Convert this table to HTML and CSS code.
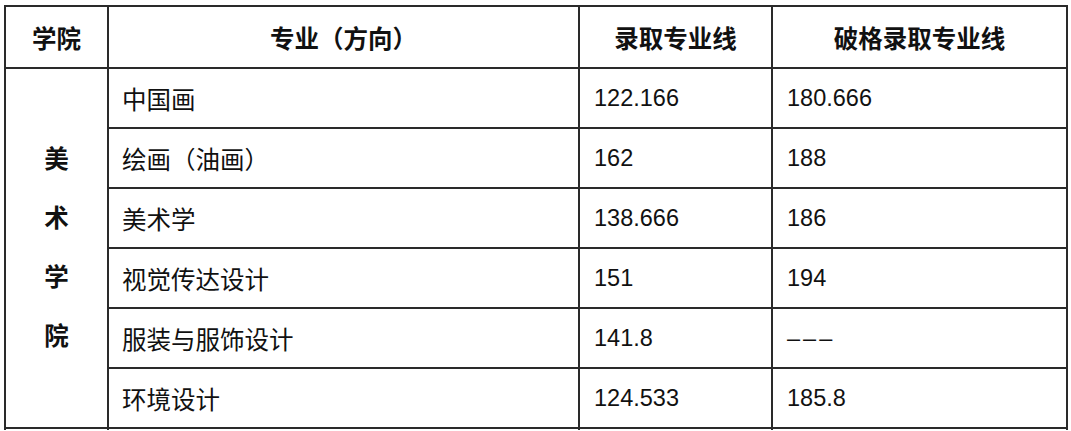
FILE: index.html
```html
<!DOCTYPE html>
<html lang="zh-CN">
<head>
<meta charset="utf-8">
<title>录取专业线</title>
<link rel="stylesheet" href="styles.css">
</head>
<body>
<table class="score-table">
  <colgroup>
    <col class="c-school">
    <col class="c-major">
    <col class="c-line">
    <col class="c-break">
  </colgroup>
  <thead>
    <tr class="head-row">
      <th>学院</th>
      <th>专业（方向）</th>
      <th>录取专业线</th>
      <th>破格录取专业线</th>
    </tr>
  </thead>
  <tbody>
    <tr class="row">
      <td class="school" rowspan="6">美<br>术<br>学<br>院</td>
      <td>中国画</td>
      <td class="num">122.166</td>
      <td class="num">180.666</td>
    </tr>
    <tr class="row">
      <td>绘画（油画）</td>
      <td class="num">162</td>
      <td class="num">188</td>
    </tr>
    <tr class="row">
      <td>美术学</td>
      <td class="num">138.666</td>
      <td class="num">186</td>
    </tr>
    <tr class="row">
      <td>视觉传达设计</td>
      <td class="num">151</td>
      <td class="num">194</td>
    </tr>
    <tr class="row">
      <td>服装与服饰设计</td>
      <td class="num">141.8</td>
      <td class="num"><span class="dash">–––</span></td>
    </tr>
    <tr class="row">
      <td>环境设计</td>
      <td class="num">124.533</td>
      <td class="num">185.8</td>
    </tr>
    <tr class="row-cut">
      <td></td>
      <td></td>
      <td></td>
      <td></td>
    </tr>
  </tbody>
</table>
</body>
</html>
```

FILE: styles.css
```css
html, body {
  margin: 0;
  padding: 0;
  background: #fff;
}

body {
  font-family: "Liberation Sans", "Noto Sans CJK SC", sans-serif;
  color: #111;
}

.score-table {
  border-collapse: collapse;
  table-layout: fixed;
  width: 1062px;
  margin: 5px 0 0 4px;
}

.c-school { width: 103px; }
.c-major { width: 471px; }
.c-line { width: 193px; }
.c-break { width: 295px; }

.score-table th,
.score-table td {
  border: 2px solid #2a2a2a;
  font-size: 24.5px;
  padding: 0 0 0 13px;
  vertical-align: middle;
  text-align: left;
  white-space: nowrap;
}

.score-table td.num {
  font-size: 23.5px;
  padding-left: 14px;
}

.dash {
  letter-spacing: 3px;
}

.score-table th {
  height: 60px;
  font-weight: bold;
  text-align: center;
  padding: 0;
}

.row td {
  height: 58px;
}

.score-table td.school {
  text-align: center;
  padding: 0;
  font-weight: bold;
  line-height: 59px;
}

.row-cut td {
  height: 1px;
  padding: 0;
  font-size: 0;
  border-bottom: 0;
}
```
